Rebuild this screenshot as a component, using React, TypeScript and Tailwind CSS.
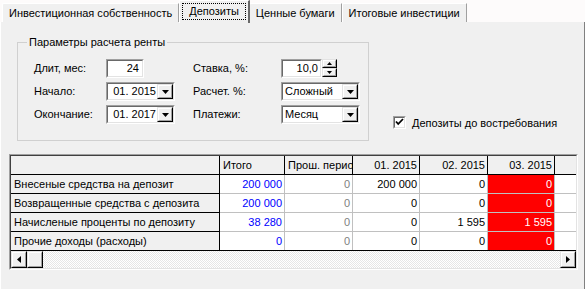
import React from 'react'

const FONT = "font-['Liberation_Sans',Arial,sans-serif]"

type Cell = { v: string; tone: 'blue' | 'gray' | 'black' | 'red' }

const ROWS: { label: string; cells: Cell[] }[] = [
  {
    label: 'Внесеные средства на депозит',
    cells: [
      { v: '200 000', tone: 'blue' },
      { v: '0', tone: 'gray' },
      { v: '200 000', tone: 'black' },
      { v: '0', tone: 'black' },
      { v: '0', tone: 'red' },
    ],
  },
  {
    label: 'Возвращенные средства с депозита',
    cells: [
      { v: '200 000', tone: 'blue' },
      { v: '0', tone: 'gray' },
      { v: '0', tone: 'black' },
      { v: '0', tone: 'black' },
      { v: '0', tone: 'red' },
    ],
  },
  {
    label: 'Начисленые проценты по депозиту',
    cells: [
      { v: '38 280', tone: 'blue' },
      { v: '0', tone: 'gray' },
      { v: '0', tone: 'black' },
      { v: '1 595', tone: 'black' },
      { v: '1 595', tone: 'red' },
    ],
  },
  {
    label: 'Прочие доходы (расходы)',
    cells: [
      { v: '0', tone: 'blue' },
      { v: '0', tone: 'gray' },
      { v: '0', tone: 'black' },
      { v: '0', tone: 'black' },
      { v: '0', tone: 'red' },
    ],
  },
]

const COL_W = ['w-[65px]', 'w-[68px]', 'w-[67px]', 'w-[68px]', 'w-[67px]']

const TONE: Record<Cell['tone'], string> = {
  blue: 'bg-white text-[#0000ff]',
  gray: 'bg-white text-[#808080]',
  black: 'bg-white text-black',
  red: 'bg-[#ff0000] text-white',
}

// classic 3D inset frame
function Sunken({ className = '', children }: { className?: string; children?: React.ReactNode }) {
  return (
    <div className={`border border-t-[#a0a0a0] border-l-[#a0a0a0] border-b-white border-r-white ${className}`}>
      <div className="h-full w-full border border-t-[#696969] border-l-[#696969] border-b-[#e3e3e3] border-r-[#e3e3e3] bg-white flex">
        {children}
      </div>
    </div>
  )
}

function Raised({ className = '', children }: { className?: string; children?: React.ReactNode }) {
  return (
    <div className={`border border-t-[#e3e3e3] border-l-[#e3e3e3] border-b-[#000] border-r-[#000] bg-[#f0f0f0] ${className}`}>
      <div className="h-full w-full border border-t-white border-l-white border-b-[#a0a0a0] border-r-[#a0a0a0] flex items-center justify-center">
        {children}
      </div>
    </div>
  )
}

function Arrow({ dir = 'down', size = 7 }: { dir?: 'down' | 'up' | 'left' | 'right'; size?: number }) {
  const h = Math.ceil(size / 2)
  const pts: Record<string, string> = {
    down: `0,0 ${size},0 ${size / 2},${h}`,
    up: `0,${h} ${size},${h} ${size / 2},0`,
    left: `${h},0 ${h},${size} 0,${size / 2}`,
    right: `0,0 0,${size} ${h},${size / 2}`,
  }
  const vert = dir === 'down' || dir === 'up'
  return (
    <svg width={vert ? size : h} height={vert ? h : size} className="block">
      <polygon points={pts[dir]} fill="#000" />
    </svg>
  )
}

function Combo({ value, width }: { value: string; width: string }) {
  return (
    <Sunken className={`${width} h-[19px]`}>
      <div className="flex-1 pl-[2px] pr-[1px] leading-[15px] text-right">{value}</div>
      <Raised className="w-[16px] h-[15px]">
        <Arrow />
      </Raised>
    </Sunken>
  )
}

function ComboLeft({ value, width }: { value: string; width: string }) {
  return (
    <Sunken className={`${width} h-[19px]`}>
      <div className="flex-1 pl-[2px] leading-[15px]">{value}</div>
      <Raised className="w-[16px] h-[15px]">
        <Arrow />
      </Raised>
    </Sunken>
  )
}

function Tab({ label, active }: { label: string; active?: boolean }) {
  if (active) {
    return (
      <div className="relative z-10 -mb-px -mr-[1px] h-[23px] px-[2px] pt-[2px] bg-[#f0f0f0] border-t border-l border-white border-r-2 border-r-[#696969] rounded-tl-[2px]">
        <div className="border border-dotted border-black px-[6px] leading-[15px]">{label}</div>
      </div>
    )
  }
  return (
    <div className="h-[19px] px-[6px] leading-[18px] bg-[#f0f0f0] border-t border-l border-white border-r border-r-[#a0a0a0] rounded-tl-[2px]">
      {label}
    </div>
  )
}

export default function App() {
  return (
    <div className={`w-[585px] h-[289px] overflow-hidden bg-[#fdfbfb] text-[11px] text-black ${FONT}`}>
      {/* Tabs */}
      <div className="flex items-end h-[22px] pl-[2px]">
        <Tab label="Инвестиционная собственность" />
        <Tab label="Депозиты" active />
        <Tab label="Ценные бумаги" />
        <Tab label="Итоговые инвестиции" />
      </div>

      {/* Page */}
      <div className="h-[267px] bg-[#f0f0f0] border-l border-white border-r border-r-[#808080]">
        <div className="flex items-end pt-[14px]">
          <fieldset className="ml-[16px] w-[352px] border border-[#d0d0d0] pb-[16px]">
            <legend className="ml-[9px] px-[2px] leading-[13px]">Параметры расчета ренты</legend>
            <div className="flex pt-[10px] pl-[16px]">
              <div className="grid grid-cols-[72px_69px] gap-y-[4px] items-center">
                <span>Длит, мес:</span>
                <Sunken className="w-[38px] h-[19px]">
                  <div className="flex-1 text-right pr-[3px] leading-[15px]">24</div>
                </Sunken>
                <span>Начало:</span>
                <Combo value="01. 2015" width="w-[69px]" />
                <span>Окончание:</span>
                <Combo value="01. 2017" width="w-[69px]" />
              </div>
              <div className="ml-[18px] grid grid-cols-[88px_79px] gap-y-[4px] items-center">
                <span>Ставка, %:</span>
                <div className="flex">
                  <Sunken className="w-[41px] h-[19px]">
                    <div className="flex-1 text-right pr-[2px] leading-[15px]">10,0</div>
                  </Sunken>
                  <div className="flex flex-col w-[15px] h-[18px]">
                    <Raised className="h-[9px]">
                      <Arrow dir="up" size={5} />
                    </Raised>
                    <Raised className="h-[9px]">
                      <Arrow dir="down" size={5} />
                    </Raised>
                  </div>
                </div>
                <span>Расчет. %:</span>
                <ComboLeft value="Сложный" width="w-[79px]" />
                <span>Платежи:</span>
                <ComboLeft value="Месяц" width="w-[79px]" />
              </div>
            </div>
          </fieldset>

          <label className="ml-[24px] mb-[10px] flex items-center gap-[6px]">
            <Sunken className="w-[13px] h-[13px]">
              <svg width="9" height="9" viewBox="0 0 9 9" className="block">
                <path d="M1 3.5 L3.2 6 L8 1" stroke="#000" strokeWidth="1.8" fill="none" />
              </svg>
            </Sunken>
            <span>Депозиты до востребования</span>
          </label>
        </div>

        {/* Grid */}
        <div className="mt-[13px] ml-[8px] w-[569px] border border-t-[#a0a0a0] border-l-[#a0a0a0] border-b-white border-r-white">
          <div className="border border-t-[#404040] border-l-[#404040] border-b-[#e3e3e3] border-r-[#e3e3e3] bg-white">
            {/* header */}
            <div className="flex h-[19px] leading-[18px] bg-[#f0f0f0] border-b border-black">
              <div className="w-[209px] border-r border-black" />
              <div className={`${COL_W[0]} border-r border-black pl-[3px]`}>Итого</div>
              <div className={`${COL_W[1]} border-r border-black pl-[3px] whitespace-nowrap overflow-hidden`}>Прош. период</div>
              <div className={`${COL_W[2]} border-r border-black pr-[2px] text-right`}>01. 2015</div>
              <div className={`${COL_W[3]} border-r border-black pr-[2px] text-right`}>02. 2015</div>
              <div className={`${COL_W[4]} border-r border-black pr-[2px] text-right`}>03. 2015</div>
              <div className="flex-1" />
            </div>
            {ROWS.map((row, i) => (
              <div
                key={row.label}
                className={`flex h-[19px] leading-[18px] border-b ${i === ROWS.length - 1 ? 'border-black' : 'border-[#c0c0c0]'}`}
              >
                <div className="w-[209px] bg-[#f0f0f0] border-r border-black pl-[3px] -mb-px border-b border-b-black">{row.label}</div>
                {row.cells.map((c, j) => (
                  <div key={j} className={`${COL_W[j]} ${TONE[c.tone]} border-r border-[#c0c0c0] pr-[2px] text-right`}>
                    {c.v}
                  </div>
                ))}
                <div className="flex-1 bg-white" />
              </div>
            ))}
            {/* horizontal scrollbar */}
            <div className="flex h-[17px] bg-[repeating-conic-gradient(#ffffff_0_25%,#e6e6e6_0_50%)] bg-[length:2px_2px]">
              <Raised className="w-[16px] h-[17px]">
                <Arrow dir="left" size={7} />
              </Raised>
              <Raised className="w-[16px] h-[17px]" />
              <div className="flex-1" />
              <Raised className="w-[16px] h-[17px]">
                <Arrow dir="right" size={7} />
              </Raised>
            </div>
          </div>
        </div>
      </div>
    </div>
  )
}
